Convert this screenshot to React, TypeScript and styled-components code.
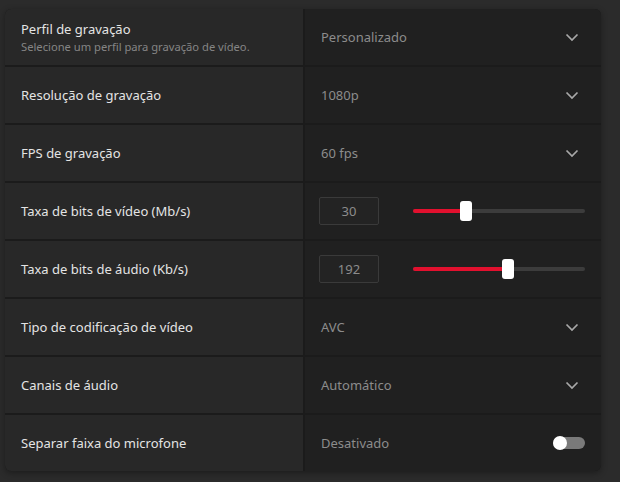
import React from 'react';
import styled, {createGlobalStyle} from 'styled-components';

const GlobalStyle = createGlobalStyle`
  body {
    margin: 0;
    background-color: #2b2b2b;
    font-family: "Noto Sans", "Open Sans", sans-serif;
  }
`

const Page = styled.div`
  padding: 9px 0 0 5px;
  height: 482px;
  box-sizing: border-box;
`

const Panel = styled.div`
  width: 596px;
  display: flex;
  flex-direction: column;
  gap: 2px;
  background-color: #1b1b1b;
  border-radius: 6px;
  overflow: hidden;
  box-shadow: 0 2px 6px rgba(0, 0, 0, 0.35);
`

const Row = styled.div`
  display: grid;
  grid-template-columns: 298px 296px;
  column-gap: 2px;
  height: 56px;
`

const Label = styled.div`
  background-color: #282828;
  padding: 0 16px;
  display: flex;
  flex-direction: column;
  justify-content: center;
  color: #e4e4e4;
  font-size: 13px;
`

const Hint = styled.div`
  color: #858585;
  font-size: 11.2px;
  margin-top: 1px;
`

const Control = styled.div`
  background-color: #202020;
  padding: 0 22px 0 16px;
  display: flex;
  align-items: center;
  justify-content: space-between;
  color: #8c8c8c;
  font-size: 13px;
`

const NumberBox = styled.div`
  width: 58px;
  height: 26px;
  box-sizing: content-box;
  border: 1px solid #3a3a3a;
  border-radius: 2px;
  background-color: #232323;
  display: flex;
  align-items: center;
  justify-content: center;
  color: #8c8c8c;
  font-size: 13px;
  margin-left: -2px;
`

const Track = styled.div`
  position: relative;
  width: 172px;
  height: 4px;
  border-radius: 2px;
  background-color: #3c3c3c;
  margin-right: -6px;
`

const Fill = styled.div`
  position: absolute;
  left: 0;
  top: 0;
  bottom: 0;
  border-radius: 2px;
  background-color: #e2102e;
`

const Thumb = styled.div`
  position: absolute;
  top: -8px;
  width: 12px;
  height: 20px;
  margin-left: -6px;
  border-radius: 3px;
  background-color: #ffffff;
`

const Switch = styled.div`
  position: relative;
  width: 32px;
  height: 12px;
  border-radius: 6px;
  background-color: #7a7a7a;
  margin-right: -6px;

  &::before {
    content: '';
    position: absolute;
    left: 0;
    top: -1px;
    width: 14px;
    height: 14px;
    border-radius: 50%;
    background-color: #ffffff;
  }
`

const Chevron = () => (
    <svg width="14" height="9" viewBox="0 0 14 9">
        <path d="M1.5 1.5 L7 7 L12.5 1.5" fill="none" stroke="#a8a8a8" strokeWidth="1.7"/>
    </svg>
)

type Setting =
    | { label: string; hint?: string; kind: 'select'; value: string }
    | { label: string; kind: 'slider'; value: number; ratio: number }
    | { label: string; kind: 'toggle'; value: string };

const settings: Setting[] = [
    {label: 'Perfil de gravação', hint: 'Selecione um perfil para gravação de vídeo.', kind: 'select', value: 'Personalizado'},
    {label: 'Resolução de gravação', kind: 'select', value: '1080p'},
    {label: 'FPS de gravação', kind: 'select', value: '60 fps'},
    {label: 'Taxa de bits de vídeo (Mb/s)', kind: 'slider', value: 30, ratio: 0.31},
    {label: 'Taxa de bits de áudio (Kb/s)', kind: 'slider', value: 192, ratio: 0.55},
    {label: 'Tipo de codificação de vídeo', kind: 'select', value: 'AVC'},
    {label: 'Canais de áudio', kind: 'select', value: 'Automático'},
    {label: 'Separar faixa do microfone', kind: 'toggle', value: 'Desativado'},
];

const SettingControl = ({setting}: { setting: Setting }) => {
    if (setting.kind === 'slider') {
        return (
            <Control>
                <NumberBox>{setting.value}</NumberBox>
                <Track>
                    <Fill style={{width: `${setting.ratio * 100}%`}}/>
                    <Thumb style={{left: `${setting.ratio * 100}%`}}/>
                </Track>
            </Control>
        )
    }
    return (
        <Control>
            <span>{setting.value}</span>
            {setting.kind === 'select' ? <Chevron/> : <Switch/>}
        </Control>
    )
}

const App = () => {
    return (
        <Page>
            <GlobalStyle/>
            <Panel>
                {settings.map(setting => (
                    <Row key={setting.label}>
                        <Label>
                            {setting.label}
                            {'hint' in setting && setting.hint && <Hint>{setting.hint}</Hint>}
                        </Label>
                        <SettingControl setting={setting}/>
                    </Row>
                ))}
            </Panel>
        </Page>
    );
};

export default App;
